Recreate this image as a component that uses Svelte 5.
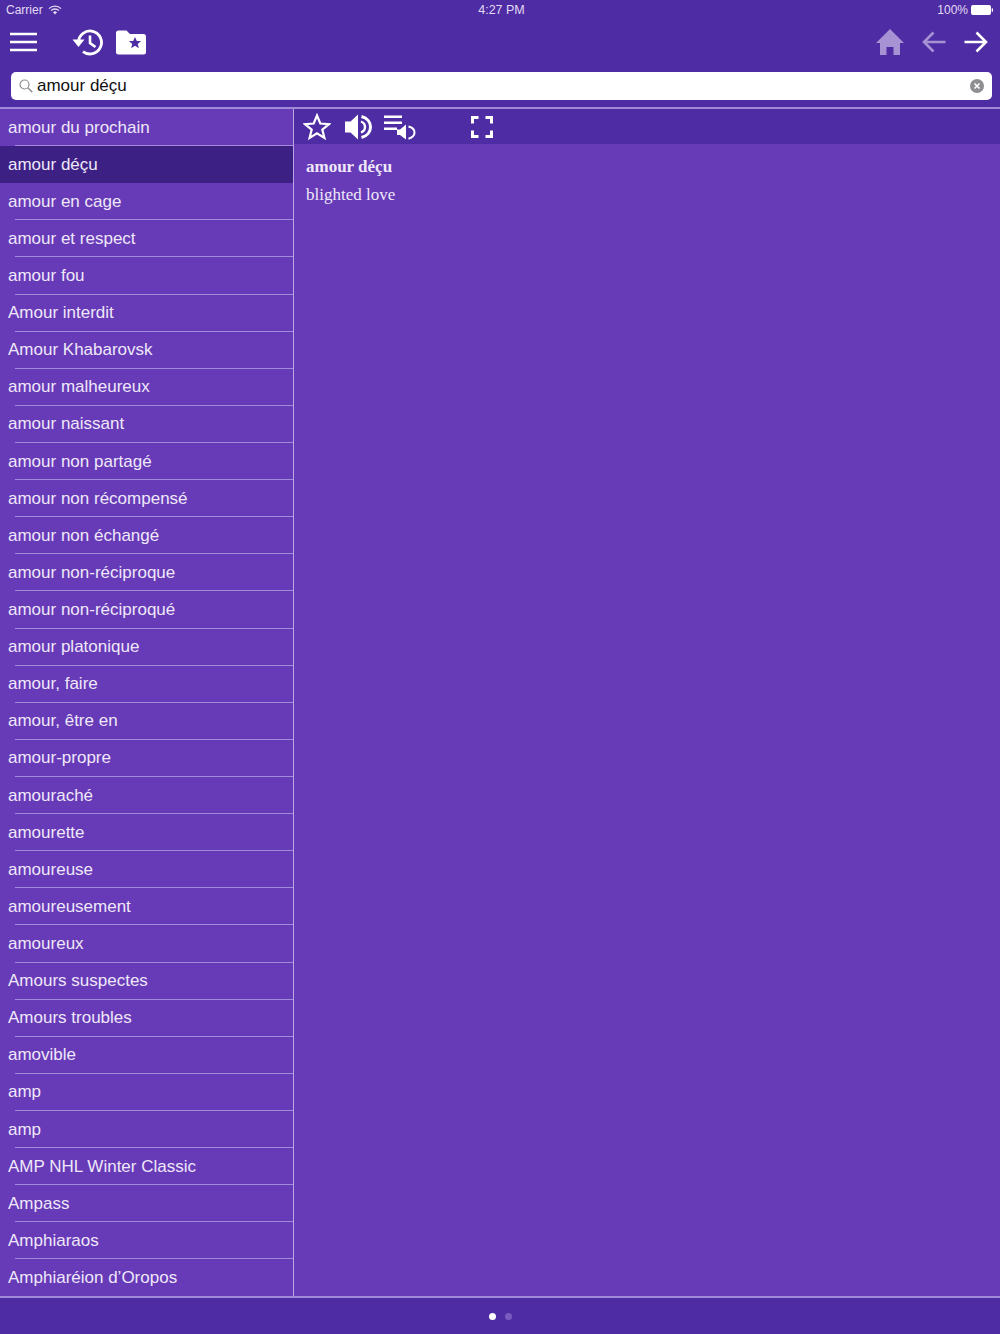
<script>
  const words = [
    "amour du prochain", "amour déçu", "amour en cage", "amour et respect", "amour fou",
    "Amour interdit", "Amour Khabarovsk", "amour malheureux", "amour naissant", "amour non partagé",
    "amour non récompensé", "amour non échangé", "amour non-réciproque", "amour non-réciproqué",
    "amour platonique", "amour, faire", "amour, être en", "amour-propre", "amouraché", "amourette",
    "amoureuse", "amoureusement", "amoureux", "Amours suspectes", "Amours troubles", "amovible",
    "amp", "amp", "AMP NHL Winter Classic", "Ampass", "Amphiaraos", "Amphiaréion d’Oropos"
  ];
  let selected = 1;
</script>

<div class="app">
  <header>
    <div class="status">
      <div class="status-left">
        <span>Carrier</span>
        <svg width="14" height="10" viewBox="0 0 14 10">
          <path d="M1 3.600a8.600 8.600 0 0 1 12 0M3 5.600a5.800 5.800 0 0 1 8 0" fill="none" stroke="currentColor" stroke-width="1.300" />
          <path d="M4.900 7.200a3.100 3.100 0 0 1 4.200 0L7 9.400z" fill="currentColor" />
        </svg>
      </div>
      <span class="time">4:27 PM</span>
      <div class="status-right">
        <span>100%</span>
        <svg width="22" height="10" viewBox="0 0 22 10">
          <rect x="0" y="0" width="20" height="10" rx="2" fill="#fff" />
          <rect x="20.700" y="3.200" width="1.300" height="3.600" rx="0.600" fill="#fff" />
        </svg>
      </div>
    </div>

    <div class="toolbar">
      <div class="tools-left">
        <svg class="menu" width="27" height="20" viewBox="0 0 27 20">
          <path d="M0 2h27M0 10h27M0 18h27" stroke="#fff" stroke-width="2.600" />
        </svg>
        <svg class="history" width="32" height="28" viewBox="0 0 32 28">
          <path d="M6.500 14A11.500 11.500 0 1 1 11 23.600" fill="none" stroke="#fff" stroke-width="2.800" />
          <path d="M0.500 11.500h12l-6 7.500z" fill="#fff" />
          <path d="M18 7.500v7.500l5.500 4" fill="none" stroke="#fff" stroke-width="2.600" />
        </svg>
        <svg class="folder" width="30" height="25" viewBox="0 0 30 25">
          <path d="M0 3a2.500 2.500 0 0 1 2.500-2.500h8l3.500 3.500h13.500a2.500 2.500 0 0 1 2.500 2.500v15.500a2.500 2.500 0 0 1-2.500 2.500h-25a2.500 2.500 0 0 1-2.500-2.500z" fill="#fff" />
          <path d="M19 7l1.800 4h4.300l-3.400 2.900 1.200 4.300-3.900-2.400-3.900 2.400 1.200-4.300-3.400-2.900h4.300z" fill="#4e2ca3" />
        </svg>
      </div>
      <div class="tools-right">
        <svg width="28" height="26" viewBox="0 0 28 26">
          <path d="M14 0L28 14h-4v12h-6.500v-8h-7v8H4V14H0z" fill="#a792d4" />
        </svg>
        <svg width="24" height="22" viewBox="0 0 24 22">
          <path d="M23.500 11H2M11.500 1.500L2 11l9.500 9.500" fill="none" stroke="#a792d4" stroke-width="2.600" />
        </svg>
        <svg width="24" height="22" viewBox="0 0 24 22">
          <path d="M0.500 11H22M12.500 1.500L22 11l-9.500 9.500" fill="none" stroke="#fff" stroke-width="2.600" />
        </svg>
      </div>
    </div>

    <div class="search">
      <svg class="glass" width="14" height="14" viewBox="0 0 14 14">
        <circle cx="5.500" cy="5.500" r="4.500" fill="none" stroke="#8e8e93" stroke-width="1.200" />
        <path d="M8.800 8.800L13.300 13.300" stroke="#8e8e93" stroke-width="1.400" />
      </svg>
      <span class="query">amour déçu</span>
      <svg class="clear" width="14" height="14" viewBox="0 0 14 14">
        <circle cx="7" cy="7" r="7" fill="#8e8e93" />
        <path d="M4.500 4.500l5 5M9.500 4.500l-5 5" stroke="#fff" stroke-width="1.600" />
      </svg>
    </div>
  </header>

  <main>
    <ul class="list">
      {#each words as word, i}
        <li class:selected={i === selected}>
          <span>{word}</span>
        </li>
      {/each}
    </ul>

    <section class="detail">
      <div class="detail-tools">
        <svg class="star" width="28" height="28" viewBox="0 0 28 28">
          <path d="M14 2.500l3.300 8 8.700 0.600-6.700 5.500 2.100 8.400-7.400-4.600-7.400 4.600 2.100-8.400-6.700-5.500 8.700-0.600z" fill="none" stroke="#fff" stroke-width="2.200" stroke-linejoin="miter" />
        </svg>
        <svg class="speaker" width="28" height="28" viewBox="0 0 28 28">
          <path d="M0 8.500h5.500L13 1.500v25l-7.500-7H0z" fill="#fff" />
          <path d="M16 8.500c2.500 1 4 3 4 5.500s-1.500 4.500-4 5.500" fill="none" stroke="#fff" stroke-width="2.400" />
          <path d="M16.500 3.500C22.500 5 25.500 9.500 25.500 14s-3 9-9 10.500" fill="none" stroke="#fff" stroke-width="3" />
        </svg>
        <svg class="playlist" width="32" height="26" viewBox="0 0 32 26">
          <path d="M0 2.800h18M0 8.800h18M0 14.800h13" stroke="#fff" stroke-width="2.600" />
          <path d="M13 15.500h3L22 10.500v15l-6-4.500h-3z" fill="#fff" />
          <path d="M24.500 12.500C28.500 13.500 30.500 15.800 30.500 18.500S28.500 23.500 24.500 24.800" fill="none" stroke="#fff" stroke-width="2" />
        </svg>
        <svg class="expand" width="22" height="22" viewBox="0 0 22 22">
          <path d="M1.500 7.500V1.500h6M14.500 1.500h6v6M20.500 14.500v6h-6M7.500 20.500h-6v-6" fill="none" stroke="#fff" stroke-width="3" />
        </svg>
      </div>
      <div class="entry">
        <h1>amour déçu</h1>
        <p>blighted love</p>
      </div>
    </section>
  </main>

  <footer>
    <i class="dot on"></i>
    <i class="dot"></i>
  </footer>
</div>

<style>
  :global(body) {
    margin: 0;
    background: #4e2ca3;
  }

  .app {
    width: 1000px;
    height: 1334px;
    display: flex;
    flex-direction: column;
    overflow: hidden;
    font-family: "Liberation Sans", Arial, sans-serif;
    background: #4e2ca3;
    color: #fff;
  }

  header {
    height: 107px;
    flex: none;
    border-bottom: 2px solid #a18bd8;
  }

  .status {
    height: 20px;
    padding: 0 7px 0 6px;
    display: grid;
    grid-template-columns: 1fr auto 1fr;
    align-items: center;
    font-size: 12px;
    color: #e2dbf3;
  }

  .status-left {
    display: flex;
    align-items: center;
    gap: 5px;
  }

  .status-right {
    display: flex;
    align-items: center;
    justify-content: flex-end;
    gap: 3px;
  }

  .time {
    font-size: 12.500px;
    padding-left: 4px;
  }

  .toolbar {
    height: 44px;
    display: flex;
    justify-content: space-between;
    align-items: center;
    padding: 0 12px 0 10px;
  }

  .tools-left {
    display: flex;
    align-items: center;
  }

  .history {
    margin-left: 35px;
  }

  .folder {
    margin-left: 12px;
  }

  .tools-right {
    display: flex;
    align-items: center;
    gap: 18px;
  }

  .search {
    height: 28px;
    margin: 8px 8px 0 11px;
    padding: 0 8px;
    display: flex;
    align-items: center;
    background: #fff;
    border-radius: 5px;
    color: #111;
    font-size: 17px;
  }

  .query {
    margin-left: 4px;
    flex: 1;
  }

  main {
    flex: 1;
    min-height: 0;
    display: flex;
    background: #673ab7;
    border-bottom: 2px solid #a18bd8;
  }

  .list {
    width: 293px;
    flex: none;
    margin: 0;
    padding: 0;
    list-style: none;
    overflow: hidden;
    border-right: 1px solid #b9a6e4;
  }

  li {
    height: 37.120px;
    box-sizing: border-box;
    padding-left: 8px;
    display: flex;
    align-items: center;
    font-size: 17px;
    color: #eee8f9;
    position: relative;
  }

  li::after {
    content: "";
    position: absolute;
    left: 15px;
    right: 0;
    bottom: 0;
    height: 1px;
    background: #a18bd8;
  }

  li.selected {
    background: #3d2084;
  }

  li.selected::after {
    left: 0;
    background: #3d2084;
  }

  .detail {
    flex: 1;
    min-width: 0;
  }

  .detail-tools {
    height: 35px;
    background: #4e2ca3;
    display: flex;
    align-items: center;
    padding-left: 9px;
  }

  .speaker {
    margin-left: 14px;
  }

  .playlist {
    margin-left: 11px;
  }

  .expand {
    margin-left: 55px;
  }

  .entry {
    padding: 13px 12px;
    font-family: "Liberation Serif", "Times New Roman", serif;
    color: #eee8f9;
    font-size: 17px;
  }

  h1 {
    margin: 0;
    font-size: 17px;
    line-height: 20px;
    font-weight: bold;
  }

  p {
    margin: 8px 0 0;
    line-height: 20px;
  }

  footer {
    height: 36px;
    flex: none;
    display: flex;
    justify-content: center;
    align-items: center;
    gap: 9px;
  }

  .dot {
    width: 7px;
    height: 7px;
    border-radius: 50%;
    background: #7a5cc0;
  }

  .dot.on {
    background: #fff;
  }
</style>
